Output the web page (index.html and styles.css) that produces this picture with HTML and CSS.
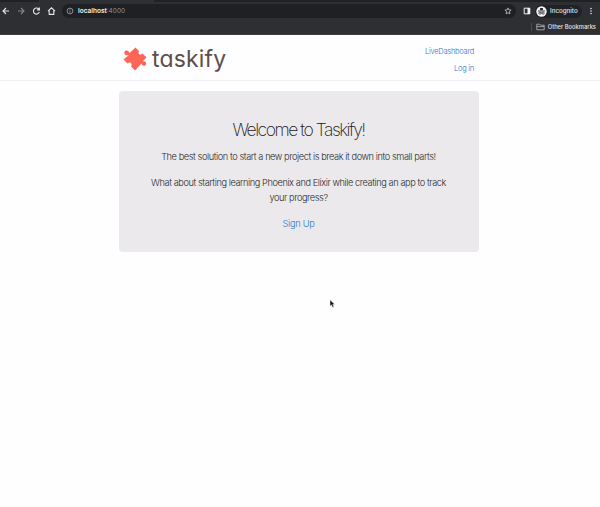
FILE: index.html
```html
<!DOCTYPE html>
<html lang="en">
<head>
<meta charset="utf-8">
<title>Taskify</title>
<link rel="stylesheet" href="styles.css">
</head>
<body>
<div class="browser">
  <div class="tabs"><span class="tab"></span></div>
  <div class="toolbar">
    <svg class="nav" width="60" height="12" viewBox="0 0 60 12" fill="none" stroke="#e4e5e8" stroke-width="1.1">
      <path d="M9 6H3M6 3 3 6l3 3"/>
      <path stroke="#85868a" d="M18 6h6M21 3l3 3-3 3"/>
      <path d="M38.800 4.200A3 3 0 1 0 39.300 7M39.400 2.500v2.400H37"/>
      <path d="M48 6.200 51.500 2.800 55 6.200M49.200 5.500v3.900h4.600V5.500"/>
    </svg>
    <div class="address">
      <svg width="8" height="8" viewBox="0 0 8 8" fill="none" stroke="#a5a7ab" stroke-width=".8"><circle cx="4" cy="4" r="2.9"/><path d="M4 3.6v2M4 2.2v.8"/></svg>
      <span class="url"><b>localhost</b>:4000</span>
      <svg class="star" width="8" height="8" viewBox="0 0 8 8" fill="none" stroke="#c9cacd" stroke-width=".8"><path d="m4 .9.9 2 2.2.2-1.7 1.5.5 2.2L4 5.7 2.1 6.8l.5-2.2L.9 3.1l2.2-.2z"/></svg>
    </div>
    <svg class="panel" width="8" height="8" viewBox="0 0 8 8"><path d="M1.2 1.2h5.6v5.6H1.2z" fill="none" stroke="#f1f1f2"/><path d="M4.5 1H7v6H4.5z" fill="#f1f1f2"/></svg>
    <div class="profile">
      <svg width="11" height="11" viewBox="0 0 11 11"><circle cx="5.5" cy="5.5" r="5.2" fill="#f3f3f4"/><path d="M3.8 4.2 4.2 2h2.6l.4 2.2z" fill="#303136"/><path d="M2 5h7" stroke="#303136" stroke-width=".9"/><g fill="none" stroke="#303136" stroke-width=".8"><circle cx="3.9" cy="7.1" r="1.1"/><circle cx="7.1" cy="7.1" r="1.1"/><path d="M5 7h1"/></g></svg>
      <span>Incognito</span>
    </div>
    <svg class="dots" width="4" height="8" viewBox="0 0 4 8" fill="#e4e5e8"><circle cx="2" cy="1.5" r=".8"/><circle cx="2" cy="4" r=".8"/><circle cx="2" cy="6.5" r=".8"/></svg>
  </div>
  <div class="bookmarks">
    <svg width="9" height="8" viewBox="0 0 9 8" fill="none" stroke="#b9babd" stroke-width=".8"><path d="M.8 6.8V1.2h2.7l.9 1h3.8v4.6zM.8 3.6h7.4"/></svg>
    <span>Other Bookmarks</span>
  </div>
</div>
<header class="header">
  <div class="container bar">
    <a class="logo">
      <svg width="24" height="24" viewBox="0 0 24 24"><path fill="#fb6658" d="M12.500 .5 16 4C14.500 7 17 9 19.500 6.500L23.500 10.500 19.500 14.500C22 13.500 24 15.500 23 17.500S19 19 18.500 16.500L12 23.500 8 19.500C10 17 7 14 4.500 16.500L.5 12.500 6 8C3.500 9 .5 7.500 1.500 5S6 3.500 6.500 6z"/></svg>
      <span class="word">taskify</span>
    </a>
    <nav class="links"><a>LiveDashboard</a><a>Log in</a></nav>
  </div>
</header>
<main class="container hero">
  <h1>Welcome to Taskify!</h1>
  <p>The best solution to start a new project is break it down into small parts!</p>
  <p>What about starting learning Phoenix and Elixir while creating an app to track<br>your progress?</p>
  <p><a class="signup">Sign Up</a></p>
</main>
<svg class="cursor" width="7" height="10" viewBox="0 0 7 10"><path d="M1 .8v6.400l1.500-1.300 1.100 2.500 1.300-.6-1.100-2.400h2z" fill="#111" stroke="#fff" stroke-width=".5"/></svg>
</body>
</html>
```
FILE: styles.css
```css
* { box-sizing: border-box; }
body { margin: 0; height: 507px; overflow: hidden; background: #fefdff; font-family: Inter, "Liberation Sans", sans-serif; font-weight: 300; color: #29292c; }
svg { display: block; flex: none; }
.browser { height: 35px; background: #2e2f33; color: #e4e5e8; font: 500 6.2px/8px Inter, sans-serif; border-bottom: 1px solid #3d3e42; }
.tabs { height: 2px; background: #202125; display: flex; }
.tab { margin-left: 39px; width: 115px; background: #2e2f33; }
.toolbar { height: 18px; display: flex; align-items: center; }
.address { margin-left: 2px; width: 454px; height: 14px; border-radius: 7px; background: #1f2024; display: flex; align-items: center; padding: 0 4px; }
.url { margin-left: 4px; color: #929397; font-weight: 400; font-size: 6.5px; }
.url b { color: #f0f0f1; font-weight: 600; }
.star { margin-left: auto; }
.panel { margin-left: 7px; }
.profile { margin-left: 4px; width: 47px; height: 13px; border-radius: 7px; background: #212226; display: flex; align-items: center; gap: 3px; padding-left: 1px; }
.dots { margin-left: 7px; }
.bookmarks { height: 13px; display: flex; align-items: center; justify-content: flex-end; gap: 3px; padding-right: 4px; font-size: 5.8px; font-weight: 500; }
.bookmarks::before { content: ""; width: 1px; height: 8px; background: #4b4c50; margin-right: 1px; }
.container { width: 360px; margin: 0 auto; }
.header { height: 46px; border-bottom: 1px solid #f0eff1; }
.bar { display: flex; justify-content: space-between; padding: 0 5px 0 4px; position: relative; left: -1px; }
.logo { display: flex; height: 48px; align-items: center; gap: 5px; }
.word { font: 400 23px/28px Inter, sans-serif; font-feature-settings: "cv11"; color: #5d4e4a; letter-spacing: .15px; }
.links { display: flex; flex-direction: column; align-items: flex-end; padding-top: 8px; font-size: 7.5px; line-height: 17px; letter-spacing: -.26px; color: #2877c9; }
.hero { position: relative; left: -1.500px; margin-top: 10px; height: 161px; border-radius: 4px; background: #ebe9ec; text-align: center; padding-top: 28px; }
h1 { margin: 0 0 8px; font-weight: 200; font-size: 17.500px; line-height: 22px; letter-spacing: -1.500px; word-spacing: .2px; color: #151516; }
p { margin: 0 0 11px; font-size: 9.200px; line-height: 15px; white-space: nowrap; letter-spacing: -.41px; }
.signup { color: #2877c9; letter-spacing: -.25px; }
.cursor { position: absolute; left: 329px; top: 299px; }
```
